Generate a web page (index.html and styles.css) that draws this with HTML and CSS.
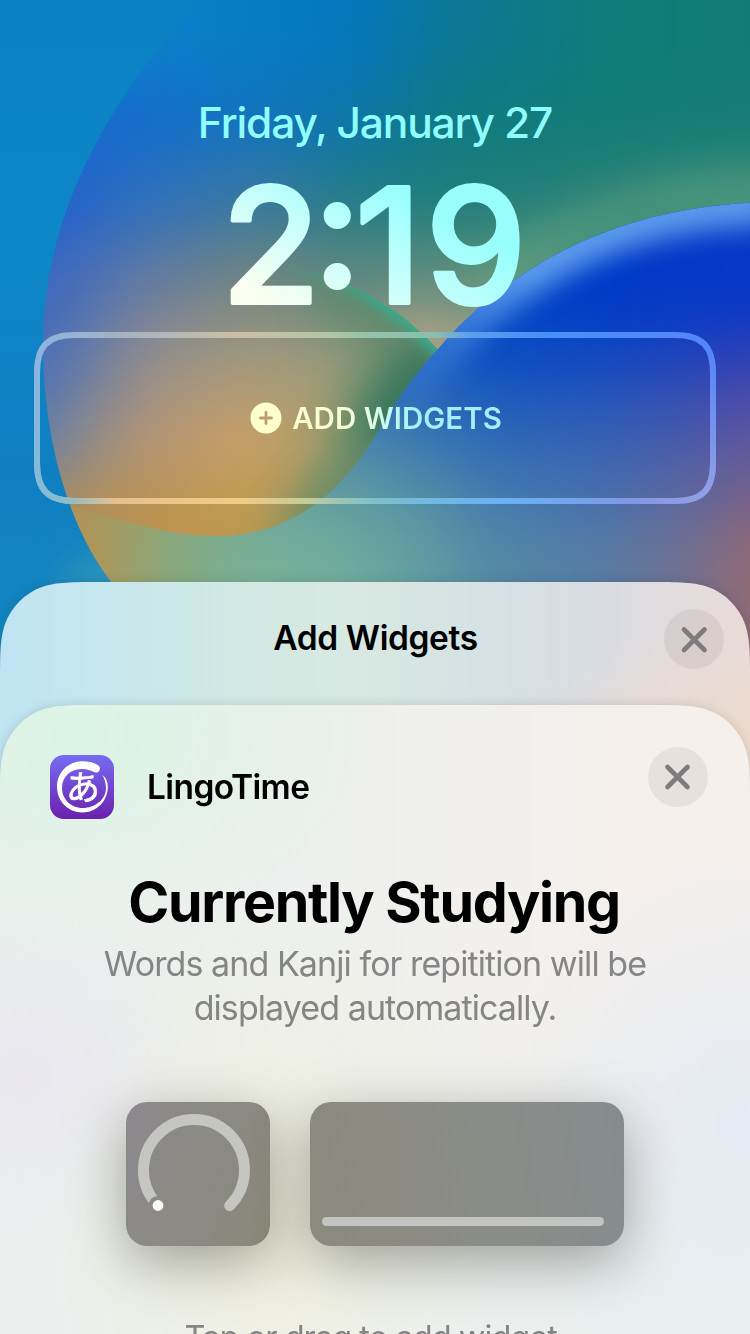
FILE: index.html
```html
<!DOCTYPE html>
<html lang="en">
<head>
<meta charset="utf-8">
<title>Add Widgets</title>
<link rel="stylesheet" href="styles.css">
</head>
<body>
<main class="screen">
  <svg class="wallpaper" viewBox="0 0 750 760" aria-hidden="true">
    <defs>
      <filter id="b20" filterUnits="userSpaceOnUse" x="-200" y="-200" width="1150" height="1150"><feGaussianBlur stdDeviation="20"/></filter>
      <filter id="b9" filterUnits="userSpaceOnUse" x="-200" y="-200" width="1150" height="1150"><feGaussianBlur stdDeviation="7"/></filter>
      <filter id="b14" filterUnits="userSpaceOnUse" x="-200" y="-200" width="1150" height="1150"><feGaussianBlur stdDeviation="13"/></filter>
      <filter id="rows" filterUnits="userSpaceOnUse" x="-200" y="-300" width="1150" height="1350"><feGaussianBlur stdDeviation="24 32"/></filter>
      <linearGradient id="sky" x1="0" y1="0" x2="0" y2="1">
        <stop offset="0" stop-color="#0a80c4"/><stop offset=".3" stop-color="#0c87c8"/><stop offset=".62" stop-color="#107fc2"/><stop offset=".8" stop-color="#1385c2"/>
      </linearGradient>
      <linearGradient id="o1" gradientUnits="userSpaceOnUse" x1="50" y1="0" x2="750" y2="0"><stop offset="0" stop-color="#0b80c8"/><stop offset=".14" stop-color="#0b80c8"/><stop offset=".29" stop-color="#067cc7"/><stop offset=".43" stop-color="#0477bd"/><stop offset=".57" stop-color="#0b7897"/><stop offset=".79" stop-color="#117c7a"/><stop offset="1" stop-color="#127c74"/></linearGradient>
      <linearGradient id="o2" gradientUnits="userSpaceOnUse" x1="50" y1="0" x2="750" y2="0"><stop offset="0" stop-color="#1a6acd"/><stop offset=".14" stop-color="#146ccb"/><stop offset=".29" stop-color="#1273be"/><stop offset=".43" stop-color="#0c76a6"/><stop offset=".57" stop-color="#107a82"/><stop offset=".79" stop-color="#127c76"/><stop offset="1" stop-color="#157c75"/></linearGradient>
      <linearGradient id="o3" gradientUnits="userSpaceOnUse" x1="50" y1="0" x2="750" y2="0"><stop offset="0" stop-color="#205fcd"/><stop offset=".14" stop-color="#2e70bc"/><stop offset=".29" stop-color="#3a789f"/><stop offset=".43" stop-color="#237c86"/><stop offset=".57" stop-color="#1e7e7b"/><stop offset=".79" stop-color="#2a8077"/><stop offset="1" stop-color="#3c8c7c"/></linearGradient>
      <linearGradient id="o4" gradientUnits="userSpaceOnUse" x1="50" y1="0" x2="750" y2="0"><stop offset="0" stop-color="#3c68c0"/><stop offset=".14" stop-color="#657ba0"/><stop offset=".29" stop-color="#738680"/><stop offset=".43" stop-color="#5f8880"/><stop offset=".57" stop-color="#648f7e"/><stop offset=".79" stop-color="#4f9880"/><stop offset="1" stop-color="#4f9880"/></linearGradient>
      <linearGradient id="o5" gradientUnits="userSpaceOnUse" x1="50" y1="0" x2="750" y2="0"><stop offset="0" stop-color="#4c70b6"/><stop offset=".14" stop-color="#958e8c"/><stop offset=".29" stop-color="#a6997c"/><stop offset=".43" stop-color="#959a7c"/><stop offset=".57" stop-color="#b0a386"/><stop offset="1" stop-color="#b0a386"/></linearGradient>
      <linearGradient id="o6" gradientUnits="userSpaceOnUse" x1="50" y1="0" x2="750" y2="0"><stop offset="0" stop-color="#6a80a6"/><stop offset=".07" stop-color="#9c8f80"/><stop offset=".14" stop-color="#b39476"/><stop offset=".27" stop-color="#caa066"/><stop offset=".36" stop-color="#b89f6a"/><stop offset=".43" stop-color="#8c9a70"/><stop offset=".52" stop-color="#447e62"/></linearGradient>
      <linearGradient id="o7" gradientUnits="userSpaceOnUse" x1="50" y1="0" x2="750" y2="0"><stop offset="0" stop-color="#b28e56"/><stop offset=".14" stop-color="#bc914d"/><stop offset=".27" stop-color="#bf994c"/><stop offset=".36" stop-color="#b09a56"/><stop offset=".45" stop-color="#86925e"/></linearGradient>
      <linearGradient id="w1" gradientUnits="userSpaceOnUse" x1="50" y1="0" x2="750" y2="0"><stop offset=".5" stop-color="#0a50c0"/><stop offset=".64" stop-color="#0046c4"/><stop offset=".79" stop-color="#003ac8"/><stop offset="1" stop-color="#0838c8"/></linearGradient>
      <linearGradient id="w2" gradientUnits="userSpaceOnUse" x1="50" y1="0" x2="750" y2="0"><stop offset=".5" stop-color="#2466bc"/><stop offset=".64" stop-color="#0e50c1"/><stop offset=".79" stop-color="#184dbe"/><stop offset=".93" stop-color="#2d45b4"/><stop offset="1" stop-color="#3f42b0"/></linearGradient>
      <linearGradient id="w3" gradientUnits="userSpaceOnUse" x1="50" y1="0" x2="750" y2="0"><stop offset=".43" stop-color="#4d86ac"/><stop offset=".5" stop-color="#3a78b2"/><stop offset=".64" stop-color="#2b66b7"/><stop offset=".79" stop-color="#335fb5"/><stop offset=".93" stop-color="#4a57aa"/><stop offset="1" stop-color="#5c56a0"/></linearGradient>
      <linearGradient id="w4" gradientUnits="userSpaceOnUse" x1="50" y1="0" x2="750" y2="0"><stop offset=".03" stop-color="#b8914f"/><stop offset=".2" stop-color="#84a982"/><stop offset=".36" stop-color="#639f9e"/><stop offset=".5" stop-color="#5692a4"/><stop offset=".64" stop-color="#3f78b0"/><stop offset=".79" stop-color="#466bae"/><stop offset=".93" stop-color="#5e659c"/><stop offset="1" stop-color="#74608c"/></linearGradient>
      <linearGradient id="w5" gradientUnits="userSpaceOnUse" x1="50" y1="0" x2="750" y2="0"><stop offset=".03" stop-color="#b69052"/><stop offset=".09" stop-color="#a69b62"/><stop offset=".17" stop-color="#86a87e"/><stop offset=".29" stop-color="#78b098"/><stop offset=".39" stop-color="#74ae9c"/><stop offset=".5" stop-color="#66a2a0"/><stop offset=".64" stop-color="#5488a6"/><stop offset=".79" stop-color="#567ca4"/><stop offset=".93" stop-color="#786e8c"/><stop offset="1" stop-color="#946a72"/></linearGradient>
      <linearGradient id="rim" gradientUnits="userSpaceOnUse" x1="400" y1="400" x2="520" y2="270">
        <stop offset="0" stop-color="#5e9bef" stop-opacity=".05"/><stop offset=".5" stop-color="#5e9bef" stop-opacity=".5"/><stop offset="1" stop-color="#5c9cec"/>
      </linearGradient>
      <linearGradient id="petalRim" gradientUnits="userSpaceOnUse" x1="285" y1="265" x2="390" y2="300">
        <stop offset="0" stop-color="#2bb496" stop-opacity="0"/><stop offset="1" stop-color="#27b496"/>
      </linearGradient>
      <clipPath id="orbClip"><path d="M222-20C120 78 43 205 43 345C43 435 67 525 112 583L170 660H770V-20Z"/></clipPath>
      <clipPath id="waveClip"><path d="M60 503C110 515 160 536 215 536C285 536 335 500 373 440C397 399 411 379 438 349C488 291 590 205 770 202V760H100Z"/></clipPath>
      <clipPath id="petalClip"><path d="M0 600V260H255C330 268 394 300 440 352C413 379 397 399 373 440C335 500 285 560 215 560Z"/></clipPath>
    </defs>
    <rect width="750" height="760" fill="url(#sky)"/>
    <ellipse cx="110" cy="600" rx="50" ry="50" fill="#3fa0b4" filter="url(#b20)" opacity=".6"/>
    <g clip-path="url(#orbClip)">
      <g filter="url(#rows)">
        <rect x="-150" y="-200" width="1050" height="280" fill="url(#o1)"/>
        <rect x="-150" y="80" width="1050" height="80" fill="url(#o2)"/>
        <rect x="-150" y="160" width="1050" height="80" fill="url(#o3)"/>
        <rect x="-150" y="240" width="1050" height="80" fill="url(#o4)"/>
        <rect x="-150" y="320" width="1050" height="80" fill="url(#o5)"/>
        <rect x="-150" y="400" width="1050" height="80" fill="url(#o6)"/>
        <rect x="-150" y="480" width="1050" height="400" fill="url(#o7)"/>
      </g>
      <path d="M410 370L445 335" stroke="#aea285" stroke-width="80" filter="url(#b20)" opacity=".7"/>
      <path d="M480 290C560 220 640 192 770 192" fill="none" stroke="#6caa7e" stroke-width="26" opacity=".65" filter="url(#b20)"/>
      <g clip-path="url(#petalClip)">
        <path d="M320 285C390 300 400 330 400 350L370 460L300 550" fill="none" stroke="#5e8a6a" stroke-width="66" opacity=".8" filter="url(#b20)"/>
        <path d="M445 345L385 445" fill="none" stroke="#256f56" stroke-width="60" opacity=".85" filter="url(#b20)"/>
        <path d="M290 262C350 274 404 304 444 352" fill="none" stroke="url(#petalRim)" stroke-width="17" filter="url(#b9)"/>
      </g>
      <g clip-path="url(#waveClip)">
        <g filter="url(#rows)">
          <rect x="-150" y="0" width="1050" height="340" fill="url(#w1)"/>
          <rect x="-150" y="340" width="1050" height="60" fill="url(#w2)"/>
          <rect x="-150" y="400" width="1050" height="60" fill="url(#w3)"/>
          <rect x="-150" y="460" width="1050" height="60" fill="url(#w4)"/>
          <rect x="-150" y="520" width="1050" height="400" fill="url(#w5)"/>
        </g>
        <path d="M400 400C411 379 411 379 438 349C488 291 590 205 770 202" fill="none" stroke="url(#rim)" stroke-width="46" filter="url(#b14)"/>
      </g>
    </g>
  </svg>

  <header class="lock">
    <div class="date">Friday, January 27</div>
    <svg class="clock" viewBox="0 0 310 128" role="img" aria-label="2:19">
      <defs>
        <linearGradient id="glass" gradientUnits="userSpaceOnUse" x1="90" y1="138" x2="170" y2="-2">
          <stop offset="0" stop-color="#fbfff0"/><stop offset=".5" stop-color="#c8fffc"/><stop offset="1" stop-color="#99fffd"/>
        </linearGradient>
      </defs>
      <text class="clock-text" x="1.500 93 135 205.500" y="115 98.500 115 115" fill="url(#glass)" stroke="url(#glass)">2:19</text>
    </svg>
    <div class="slot">
      <svg class="slot-frame" viewBox="0 0 682 172" aria-hidden="true">
        <defs>
          <linearGradient id="ft" gradientUnits="userSpaceOnUse" x1="0" y1="0" x2="682" y2="0">
            <stop offset="0" stop-color="#8db4e2"/><stop offset=".12" stop-color="#a3b2c2"/><stop offset=".3" stop-color="#cabfa6"/><stop offset=".42" stop-color="#b5c5a4"/><stop offset=".5" stop-color="#92c4aa"/><stop offset=".59" stop-color="#8cbcae"/><stop offset=".64" stop-color="#5a9ff0"/><stop offset=".75" stop-color="#468ff5"/><stop offset="1" stop-color="#5485fa"/>
          </linearGradient>
          <linearGradient id="fb" gradientUnits="userSpaceOnUse" x1="0" y1="0" x2="682" y2="0">
            <stop offset="0" stop-color="#80bcd8"/><stop offset=".04" stop-color="#86bccc"/><stop offset=".12" stop-color="#e6c090"/><stop offset=".3" stop-color="#f2cb86"/><stop offset=".4" stop-color="#c4cb98"/><stop offset=".5" stop-color="#7cc0cc"/><stop offset=".6" stop-color="#70b8e4"/><stop offset=".7" stop-color="#68b0f2"/><stop offset=".88" stop-color="#8198e2"/><stop offset="1" stop-color="#96a0e4"/>
          </linearGradient>
          <linearGradient id="fade" x1="0" y1="0" x2="0" y2="1"><stop offset=".1" stop-color="#000"/><stop offset=".95" stop-color="#fff"/></linearGradient>
          <mask id="low"><rect width="682" height="172" fill="url(#fade)"/></mask>
        </defs>
        <path d="M3 41C3 14 14 3 41 3H641C668 3 679 14 679 41V131C679 158 668 169 641 169H41C14 169 3 158 3 131Z" class="frame-line" stroke="url(#ft)"/>
        <path mask="url(#low)" d="M3 41C3 14 14 3 41 3H641C668 3 679 14 679 41V131C679 158 668 169 641 169H41C14 169 3 158 3 131Z" class="frame-line" stroke="url(#fb)"/>
      </svg>
      <div class="slot-label">
        <svg class="plus" viewBox="0 0 32 32" aria-hidden="true"><path fill="#ffffce" fill-rule="evenodd" d="M16 .5a15.500 15.500 0 1 0 0 31a15.500 15.500 0 1 0 0-31ZM14.600 10.500a1.400 1.400 0 0 1 2.800 0V14.600H21.500a1.400 1.400 0 0 1 0 2.800H17.400V21.500a1.400 1.400 0 0 1-2.800 0V17.400H10.500a1.400 1.400 0 0 1 0-2.800H14.600Z"/></svg>
        <span class="slot-text">ADD WIDGETS</span>
      </div>
    </div>
  </header>

  <section class="sheet-wrap gallery">
    <div class="sheet gallery-bg">
      <div class="gallery-bar">
        <h2 class="gallery-title">Add Widgets</h2>
        <button class="close" aria-label="Close"><svg viewBox="0 0 60 60"><path d="M20 20.500L40.500 41M40.500 20.500L20 41"/></svg></button>
      </div>
      <div class="sheet-wrap detail">
        <div class="sheet detail-bg">
          <div class="app-row">
            <svg class="app-icon" viewBox="0 0 64 64" aria-hidden="true">
              <defs><linearGradient id="ic" x1="0" y1="0" x2="0" y2="1"><stop offset="0" stop-color="#766df2"/><stop offset="1" stop-color="#6c20ae"/></linearGradient></defs>
              <rect width="64" height="64" rx="14" fill="url(#ic)"/>
              <path fill="#fff" d="M48.500 10.500C44 7.500 38 6.200 32 6.300C18 6.500 7 17.500 7 32C7 46 18 57.500 32.500 57.500C46 57.500 57.800 46.500 57.800 32C57.800 27 56 22.500 52.500 20C55 25 56 29 56 33C56 44.500 45 53 32.500 53C21 53 12 44 12 33C12 21 21 14 32.500 14C37 14 41 15.500 44.500 17.300C49.500 19 51.500 13 48.500 10.500Z"/>
              <text class="icon-kana" x="33" y="45">あ</text>
            </svg>
            <span class="app-name">LingoTime</span>
            <button class="close" aria-label="Close"><svg viewBox="0 0 60 60"><path d="M19.500 20L39.500 40M39.500 20L19.500 40"/></svg></button>
          </div>
          <h1 class="heading">Currently Studying</h1>
          <p class="desc">Words and Kanji for repitition will be<br>displayed automatically.</p>
          <div class="tiles">
            <div class="tile tile-small">
              <svg viewBox="0 0 144 144" aria-hidden="true">
                <defs><mask id="notch"><rect width="144" height="144" fill="#fff"/><circle cx="32" cy="103.500" r="9.500" fill="#000"/></mask></defs>
                <path mask="url(#notch)" d="M32.300 103.700A50.500 50.500 0 1 1 103.700 103.700" fill="none" stroke="#c5c5c2" stroke-width="11" stroke-linecap="round"/>
                <circle cx="32" cy="103.500" r="5.400" fill="#fff"/>
              </svg>
            </div>
            <div class="tile tile-wide"><div class="bar"></div></div>
          </div>
          <p class="hint">Tap or drag to add widget.</p>
        </div>
      </div>
    </div>
  </section>
</main>
</body>
</html>
```
FILE: styles.css
```css
* { box-sizing: border-box; }
body { margin: 0; font-family: Inter, "Noto Sans CJK JP", sans-serif; }
h1, h2, p { margin: 0; }
.screen { position: relative; width: 750px; height: 1334px; overflow: hidden; display: flex; flex-direction: column; }
.wallpaper { position: absolute; left: 0; top: 0; width: 750px; height: 760px; }
.wallpaper feGaussianBlur { color-interpolation-filters: sRGB; }

.lock { position: relative; height: 582px; flex: none; display: flex; flex-direction: column; align-items: center; padding-top: 95px; }
.date { height: 56px; line-height: 56px; font-size: 42.500px; font-weight: 500; letter-spacing: -1.15px; color: #8ffdff; white-space: nowrap; }
.clock { width: 310px; height: 128px; margin-top: 37px; margin-bottom: 16px; overflow: visible; }
.clock-text { font-size: 160px; font-weight: 500; stroke-width: 4px; stroke-linejoin: round; }
.slot { width: 682px; height: 172px; display: grid; }
.slot-frame { grid-area: 1 / 1; width: 682px; height: 172px; }
.frame-line { fill: none; stroke-width: 6; }
.slot-label { grid-area: 1 / 1; display: flex; align-items: center; justify-content: center; gap: 10px; padding-left: 2px; }
.plus { width: 32px; height: 32px; }
.slot-text { font-size: 29.500px; font-weight: 600; letter-spacing: 0; white-space: nowrap; background: linear-gradient(90deg, #ffffd2 0%, #f2ffd6 32%, #c8fcf0 45%, #a4f2ff 58%, #a4eeff 100%); -webkit-background-clip: text; background-clip: text; color: transparent; }

.sheet-wrap { filter: drop-shadow(0 0 6px rgba(0, 0, 0, .12)); }
.gallery { flex: none; height: 752px; }
.sheet { clip-path: path("M0 101C0 72 0 57 5 42C11 25 25 11 42 5C57 0 72 0 101 0H649C678 0 693 0 708 5C725 11 739 25 745 42C750 57 750 72 750 101V900H0Z"); }
.gallery-bg { height: 752px; background:
  radial-gradient(ellipse 230px 130px at 750px 165px, #eedbcc 0%, rgba(238, 219, 204, 0) 100%),
  linear-gradient(90deg, #bfe4f2 0%, #c6e7ee 14%, #d3e9e3 32%, #d7e9e2 48%, #d5e1e4 66%, #d9dce2 80%, #e4dcdd 92%, #e8dbd9 100%); }
.gallery-bar { height: 123px; display: grid; grid-template-columns: 60px 1fr 60px; padding: 27px 26px 0 27px; align-items: start; }
.gallery-title { grid-column: 2; line-height: 58px; font-size: 33.500px; font-weight: 600; letter-spacing: -0.4px; text-align: center; }
.close { width: 60px; height: 60px; padding: 0; border: 0; border-radius: 50%; background: rgba(60, 50, 50, .08); }
.close svg { display: block; width: 60px; height: 60px; }
.close path { fill: none; stroke: #7d7b7e; stroke-width: 4.600; stroke-linecap: round; }

.detail-bg { height: 629px; background:
  radial-gradient(ellipse 300px 200px at 80px 30px, #dbf4e5 0%, rgba(219, 244, 229, 0) 100%),
  radial-gradient(ellipse 200px 170px at 20px 370px, #eae7ef 0%, rgba(234, 231, 239, 0) 100%),
  radial-gradient(ellipse 240px 280px at 740px 420px, #e5ebf3 0%, rgba(229, 235, 243, 0) 100%),
  radial-gradient(ellipse 230px 330px at 270px 520px, #f1f1de 0%, rgba(241, 241, 222, 0) 100%),
  linear-gradient(180deg, rgba(235, 240, 239, 0) 45%, #ebf0ef 90%),
  linear-gradient(90deg, #e9f0ec 0%, #eef0ee 45%, #f5f0ec 85%, #f5f0ec 100%); }
.app-row { height: 163px; padding: 42px 42px 0 50px; display: flex; align-items: flex-start; }
.app-icon { width: 64px; height: 64px; margin-top: 8px; }
.icon-kana { font-family: "Noto Sans CJK JP", sans-serif; font-size: 34px; font-weight: 400; fill: #fff; stroke: #fff; stroke-width: .6px; stroke-linejoin: round; text-anchor: middle; }
.app-name { flex: 1; margin: 20px 0 0 33px; line-height: 40px; font-size: 33.500px; font-weight: 600; letter-spacing: -0.6px; }
.heading { height: 74px; line-height: 68px; font-size: 55.500px; font-weight: 700; letter-spacing: -1.3px; text-align: center; white-space: nowrap; padding-right: 2px; }
.desc { height: 160px; line-height: 44px; font-size: 34px; letter-spacing: -0.92px; text-align: center; color: #858587; white-space: nowrap; }
.tiles { display: flex; gap: 40px; padding-left: 126px; }
.tile { height: 144px; border-radius: 21px; box-shadow: 0 16px 56px rgba(50, 50, 40, .42); }
.tile-small { width: 144px; background: linear-gradient(110deg, #8b898d 0%, #8b8a84 50%, #8a8878 100%); }
.tile-small svg { display: block; width: 144px; height: 144px; }
.tile-wide { width: 314px; background: linear-gradient(80deg, #8b8a7d 0%, #8b8b82 30%, #898c88 60%, #868c8e 100%); padding: 115px 20px 0 12px; }
.bar { height: 9px; border-radius: 4.500px; background: #c4c5c3; }
.hint { margin-top: 70px; line-height: 44px; font-size: 32.500px; letter-spacing: -0.95px; text-align: center; color: #858587; white-space: nowrap; }
```
